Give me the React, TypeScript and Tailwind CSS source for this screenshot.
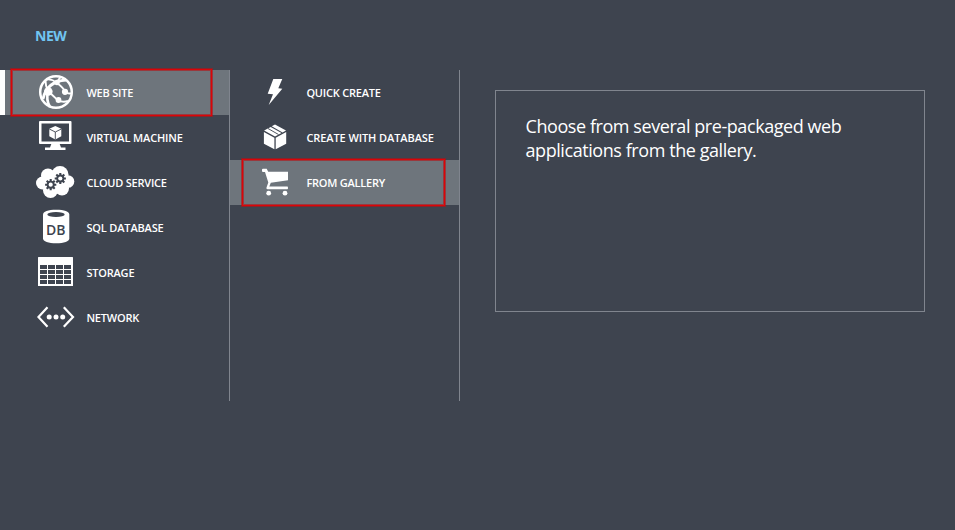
import type { ReactNode } from 'react';

const DARK = '#3e444f';

function Icon({ children }: { children: ReactNode }) {
  return (
    <svg className="h-[45px] w-[57px] shrink-0" viewBox="0 0 57 45" fill="white">
      {children}
    </svg>
  );
}

function GlobeIcon() {
  return (
    <Icon>
      <circle cx="26" cy="22" r="15.8" fill="none" stroke="white" strokeWidth="2.5" />
      <g fill="none" stroke="white" strokeWidth="1.9">
        <path d="M13 29 C15 19 22 11 36 10" strokeWidth="2.8" />
        <path d="M15.5 11 C15.5 14 16.500 18 18 21 L27.5 30 C31 32 35 32 38 31" />
        <path d="M18 21 C16.500 27 17 32 20 37" strokeWidth="2.6" />
        <path d="M17 9.500 C21 9 24 10.500 27 13 C31 16 34 19 35.500 22" />
        <path d="M26 13 L31 6.500 M34 22 C38 24 40 24 42 23" />
      </g>
      <circle cx="18.300" cy="21.500" r="4.300" />
      <circle cx="27" cy="12.500" r="2.700" />
      <circle cx="35" cy="21.800" r="3.100" />
      <circle cx="28.500" cy="30" r="2.900" />
    </Icon>
  );
}

function MachineIcon() {
  return (
    <Icon>
      <path fillRule="evenodd" d="M10 6H40.500Q41.500 6 41.500 7V28Q41.500 29 40.500 29H10Q9 29 9 28V7Q9 6 10 6ZM11.500 8.500V26.500H39V8.500Z" />
      <path d="M21.500 28.500H29.500L31 32.500H35.500V35H15V32.500H20Z" />
      <path d="M25.300 11L31.300 13.800V21.300L25.300 24.500L19.300 21.300V13.800Z" />
      <path d="M19.300 14L25.300 17L31.300 14M25.300 17V24.500" fill="none" stroke={DARK} strokeWidth=".9" />
    </Icon>
  );
}

function Gear({ x, y }: { x: number; y: number }) {
  return (
    <g transform={`translate(${x} ${y})`}>
      <g stroke={DARK} strokeWidth="2.1">
        <path d="M0-5.600V5.600M-5.600 0H5.600M-4-4L4 4M-4 4L4-4" />
      </g>
      <circle r="4" fill={DARK} />
      <circle r="2.100" fill="white" />
    </g>
  );
}

function CloudIcon() {
  return (
    <Icon>
      <circle cx="18" cy="15.500" r="7" />
      <circle cx="30" cy="14.500" r="8.500" />
      <circle cx="12.500" cy="23" r="6.500" />
      <circle cx="38" cy="21.500" r="6.300" />
      <circle cx="20.500" cy="30.500" r="7.500" />
      <circle cx="32" cy="28.500" r="7" />
      <rect x="14" y="15" width="22" height="15" />
      <Gear x={20.7} y={24.7} />
      <Gear x={30.3} y={18.5} />
    </Icon>
  );
}

function DatabaseIcon() {
  return (
    <Icon>
      <path d="M13 9.500C13 6.500 18 4.700 26.200 4.700S39.300 6.500 39.300 9.500V33.500C39.300 36.500 34 38.300 26.200 38.300S13 36.500 13 33.500Z" />
      <ellipse cx="26" cy="9.500" rx="8.700" ry="2.600" fill={DARK} />
      <text x="25.800" y="29.500" textAnchor="middle" textLength="19.500" lengthAdjust="spacingAndGlyphs" fill={DARK} className="font-['Open_Sans',sans-serif] text-[14px] font-semibold">DB</text>
    </Icon>
  );
}

function StorageIcon() {
  return (
    <Icon>
      <rect x="8" y="7" width="35" height="29" rx=".6" />
      <g fill={DARK}>
        {[15, 20, 25, 30].map((y) =>
          [10, 18, 26, 34].map((x) => <rect key={`${x}-${y}`} x={x} y={y} width="7" height="4" />),
        )}
      </g>
    </Icon>
  );
}

function NetworkIcon() {
  return (
    <Icon>
      <path d="M17.500 12.300L8.500 22L17.500 31.700M33.800 12.300L43 22L33.800 31.700" fill="none" stroke="white" strokeWidth="2.200" />
      <circle cx="19.200" cy="22" r="2.500" />
      <circle cx="26" cy="22" r="2.500" />
      <circle cx="32.700" cy="22" r="2.500" />
    </Icon>
  );
}

function BoltIcon() {
  return (
    <Icon>
      <path d="M23.300 9H32.300L28.300 18.300L32.300 18.800L18.700 35L23 24.300L17.700 23.700Z" />
    </Icon>
  );
}

function BoxIcon() {
  return (
    <Icon>
      <path d="M13.900 17L24.400 22.700V34.200L13.900 28.700ZM36.200 17L25.700 22.700V34.200L36.200 28.700Z" />
      <path d="M25 9.500L36 15.500L32.600 17.400L21.700 11.300ZM20.700 11.900L31.500 18L25 21.600L14.100 15.500Z" />
      <path d="M18 13.500L28.500 19.500" stroke={DARK} strokeWidth=".9" />
    </Icon>
  );
}

function CartIcon() {
  return (
    <Icon>
      <path d="M12 9.700Q12 8.700 13 8.700H16.700L18.200 11.800H38V20.300L20.800 22.800L19.300 26.500H37.300Q38 26.500 38 27.900T37.300 29.300H17.500Q16 29.300 16.500 27.500L18.300 22.500L15 12H13Q12 12 12 11Z" />
      <circle cx="18.700" cy="33.200" r="2.400" />
      <circle cx="35" cy="33.200" r="2.400" />
    </Icon>
  );
}

type Item = { label: string; icon: ReactNode; spacing: string };

const services: Item[] = [
  { label: 'WEB SITE', icon: <GlobeIcon />, spacing: 'tracking-[-0.2px]' },
  { label: 'VIRTUAL MACHINE', icon: <MachineIcon />, spacing: 'tracking-[-0.14px]' },
  { label: 'CLOUD SERVICE', icon: <CloudIcon />, spacing: 'tracking-[-0.22px]' },
  { label: 'SQL DATABASE', icon: <DatabaseIcon />, spacing: 'tracking-[-0.16px]' },
  { label: 'STORAGE', icon: <StorageIcon />, spacing: 'tracking-[-0.2px]' },
  { label: 'NETWORK', icon: <NetworkIcon />, spacing: 'tracking-[-0.2px]' },
];

const options: Item[] = [
  { label: 'QUICK CREATE', icon: <BoltIcon />, spacing: 'tracking-[-0.2px]' },
  { label: 'CREATE WITH DATABASE', icon: <BoxIcon />, spacing: 'tracking-[-0.09px]' },
  { label: 'FROM GALLERY', icon: <CartIcon />, spacing: 'tracking-[-0.23px]' },
];

function Highlight({ place }: { place: string }) {
  return (
    <div
      className={`absolute -top-px h-[47px] border border-[#dc0408] shadow-[0_0_0_1px_#b80f1499,inset_0_0_0_1px_#b80f1499] ${place}`}
    />
  );
}

function Row({ item, inset, selected, children }: { item: Item; inset: string; selected: boolean; children?: ReactNode }) {
  return (
    <li className={`relative flex h-[45px] items-center ${inset} ${selected ? 'bg-[#6e757c]' : ''}`}>
      {item.icon}
      <span className={`-ml-[0.6px] whitespace-nowrap text-[11px] leading-[15px] font-semibold ${item.spacing}`}>{item.label}</span>
      {children}
    </li>
  );
}

export default function App() {
  return (
    <main className="h-[530px] w-[955px] overflow-hidden bg-[#3e444f] font-['Open_Sans','Noto_Sans',sans-serif] text-white">
      <h1 className="h-[70px] pt-[26px] pl-[35px] text-[14px] leading-5 font-bold tracking-[-0.5px] text-[#71c5f1]">NEW</h1>
      <div className="flex items-start">
        <ul className="h-[331px] w-[230px] border-r border-[#80858e]">
          {services.map((item, i) => (
            <Row key={item.label} item={item} selected={i === 0} inset={i === 0 ? 'border-l-[5px] border-white pl-[25px]' : 'pl-[30px]'}>
              {i === 0 && <Highlight place="left-[6px] w-[201px]" />}
            </Row>
          ))}
        </ul>
        <ul className="h-[331px] w-[230px] border-r border-[#80858e]">
          {options.map((item, i) => (
            <Row key={item.label} item={item} selected={i === 2} inset="pl-[20px]">
              {i === 2 && <Highlight place="left-[12px] w-[203px]" />}
            </Row>
          ))}
        </ul>
        <section className="mt-5 ml-[35px] h-[222px] w-[430px] border border-[#80858e] pt-[23px] pl-[29.5px]">
          <p className="w-[340px] text-[18px] leading-6 tracking-[-0.43px]">
            Choose from several pre-packaged web<br />applications from the gallery.
          </p>
        </section>
      </div>
    </main>
  );
}
